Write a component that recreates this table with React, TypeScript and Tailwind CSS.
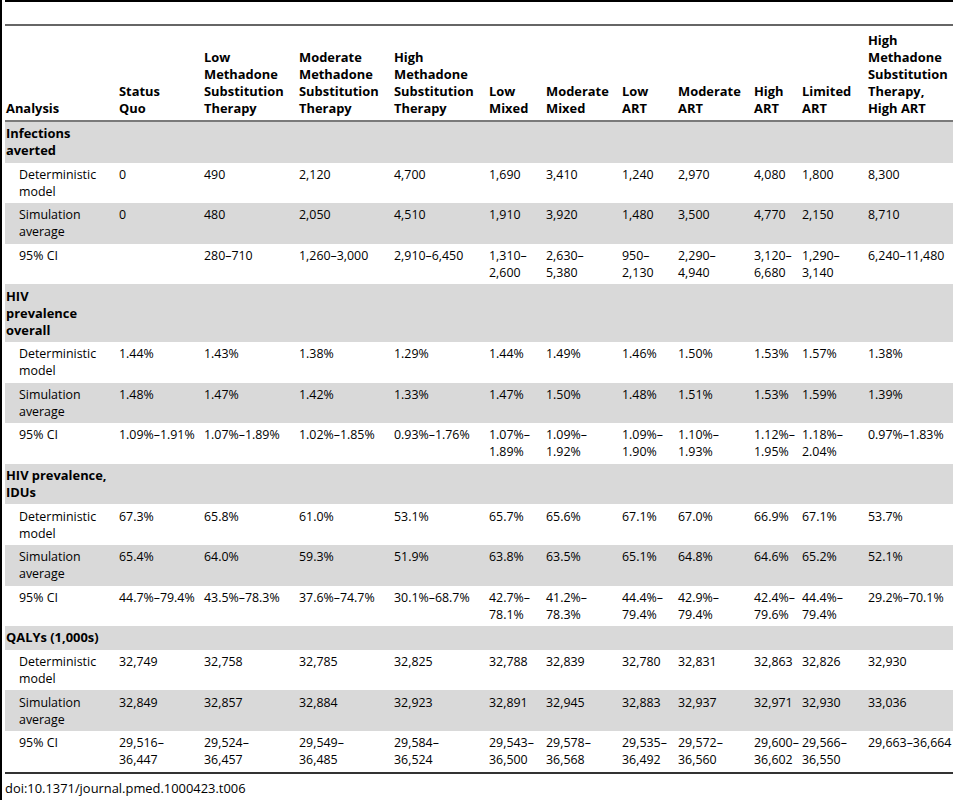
type Section = {
  title: string;
  rows: { label: string; values: string[] }[];
};

const headers = [
  "Analysis",
  "Status\nQuo",
  "Low\nMethadone\nSubstitution\nTherapy",
  "Moderate\nMethadone\nSubstitution\nTherapy",
  "High\nMethadone\nSubstitution\nTherapy",
  "Low\nMixed",
  "Moderate\nMixed",
  "Low\nART",
  "Moderate\nART",
  "High\nART",
  "Limited\nART",
  "High\nMethadone\nSubstitution\nTherapy,\nHigh ART",
];

const colWidths = [113, 85, 95, 95, 95, 57, 76, 56, 76, 48, 66, 86];

const sections: Section[] = [
  {
    title: "Infections\naverted",
    rows: [
      {
        label: "Deterministic\nmodel",
        values: ["0", "490", "2,120", "4,700", "1,690", "3,410", "1,240", "2,970", "4,080", "1,800", "8,300"],
      },
      {
        label: "Simulation\naverage",
        values: ["0", "480", "2,050", "4,510", "1,910", "3,920", "1,480", "3,500", "4,770", "2,150", "8,710"],
      },
      {
        label: "95% CI",
        values: ["", "280–710", "1,260–3,000", "2,910–6,450", "1,310–\n2,600", "2,630–\n5,380", "950–\n2,130", "2,290–\n4,940", "3,120–\n6,680", "1,290–\n3,140", "6,240–11,480"],
      },
    ],
  },
  {
    title: "HIV\nprevalence\noverall",
    rows: [
      {
        label: "Deterministic\nmodel",
        values: ["1.44%", "1.43%", "1.38%", "1.29%", "1.44%", "1.49%", "1.46%", "1.50%", "1.53%", "1.57%", "1.38%"],
      },
      {
        label: "Simulation\naverage",
        values: ["1.48%", "1.47%", "1.42%", "1.33%", "1.47%", "1.50%", "1.48%", "1.51%", "1.53%", "1.59%", "1.39%"],
      },
      {
        label: "95% CI",
        values: ["1.09%–1.91%", "1.07%–1.89%", "1.02%–1.85%", "0.93%–1.76%", "1.07%–\n1.89%", "1.09%–\n1.92%", "1.09%–\n1.90%", "1.10%–\n1.93%", "1.12%–\n1.95%", "1.18%–\n2.04%", "0.97%–1.83%"],
      },
    ],
  },
  {
    title: "HIV prevalence,\nIDUs",
    rows: [
      {
        label: "Deterministic\nmodel",
        values: ["67.3%", "65.8%", "61.0%", "53.1%", "65.7%", "65.6%", "67.1%", "67.0%", "66.9%", "67.1%", "53.7%"],
      },
      {
        label: "Simulation\naverage",
        values: ["65.4%", "64.0%", "59.3%", "51.9%", "63.8%", "63.5%", "65.1%", "64.8%", "64.6%", "65.2%", "52.1%"],
      },
      {
        label: "95% CI",
        values: ["44.7%–79.4%", "43.5%–78.3%", "37.6%–74.7%", "30.1%–68.7%", "42.7%–\n78.1%", "41.2%–\n78.3%", "44.4%–\n79.4%", "42.9%–\n79.4%", "42.4%–\n79.6%", "44.4%–\n79.4%", "29.2%–70.1%"],
      },
    ],
  },
  {
    title: "QALYs (1,000s)",
    rows: [
      {
        label: "Deterministic\nmodel",
        values: ["32,749", "32,758", "32,785", "32,825", "32,788", "32,839", "32,780", "32,831", "32,863", "32,826", "32,930"],
      },
      {
        label: "Simulation\naverage",
        values: ["32,849", "32,857", "32,884", "32,923", "32,891", "32,945", "32,883", "32,937", "32,971", "32,930", "33,036"],
      },
      {
        label: "95% CI",
        values: ["29,516–\n36,447", "29,524–\n36,457", "29,549–\n36,485", "29,584–\n36,524", "29,543–\n36,500", "29,578–\n36,568", "29,535–\n36,492", "29,572–\n36,560", "29,600–\n36,602", "29,566–\n36,550", "29,663–36,664"],
      },
    ],
  },
];

export default function App() {
  return (
    <div
      className="h-[800px] w-[953px] overflow-hidden border-l-2 border-black bg-white pl-[3px] text-[12.4px] leading-[17px] text-black"
      style={{ fontFamily: '"Open Sans", "Noto Sans", sans-serif' }}
    >
      <div className="h-[24px] border-t-2 border-black" />
      <table className="w-[948px] table-fixed border-collapse">
        <colgroup>
          {colWidths.map((w, i) => (
            <col key={i} style={{ width: w }} />
          ))}
        </colgroup>
        <thead>
          <tr className="border-t-2 border-b-2 border-t-[#666] border-b-[#7a7a7a]">
            {headers.map((h, i) => (
              <th
                key={i}
                className="whitespace-pre pt-[6px] pb-[3px] pl-[1px] text-left align-bottom text-[12.9px] font-bold"
              >
                {h}
              </th>
            ))}
          </tr>
        </thead>
        <tbody>
          {sections.map((s) => (
            <>
              <tr key={s.title} className="bg-[#d9d9d9]">
                <td
                  colSpan={12}
                  className="whitespace-pre py-[3.3px] pl-[1px] align-top text-[12.9px] font-bold"
                >
                  {s.title}
                </td>
              </tr>
              {s.rows.map((r, ri) => (
                <tr
                  key={s.title + r.label}
                  className={ri === 1 ? "bg-[#d9d9d9]" : "bg-white"}
                >
                  <td className="whitespace-pre py-[3.3px] pl-[14px] align-top">
                    {r.label}
                  </td>
                  {r.values.map((v, vi) => (
                    <td
                      key={vi}
                      className="whitespace-pre py-[3.3px] pl-[1px] align-top"
                    >
                      {v}
                    </td>
                  ))}
                </tr>
              ))}
            </>
          ))}
        </tbody>
      </table>
      <div className="border-t-2 border-[#333] pt-[6px] text-[12.9px]">
        doi:10.1371/journal.pmed.1000423.t006
      </div>
    </div>
  );
}
